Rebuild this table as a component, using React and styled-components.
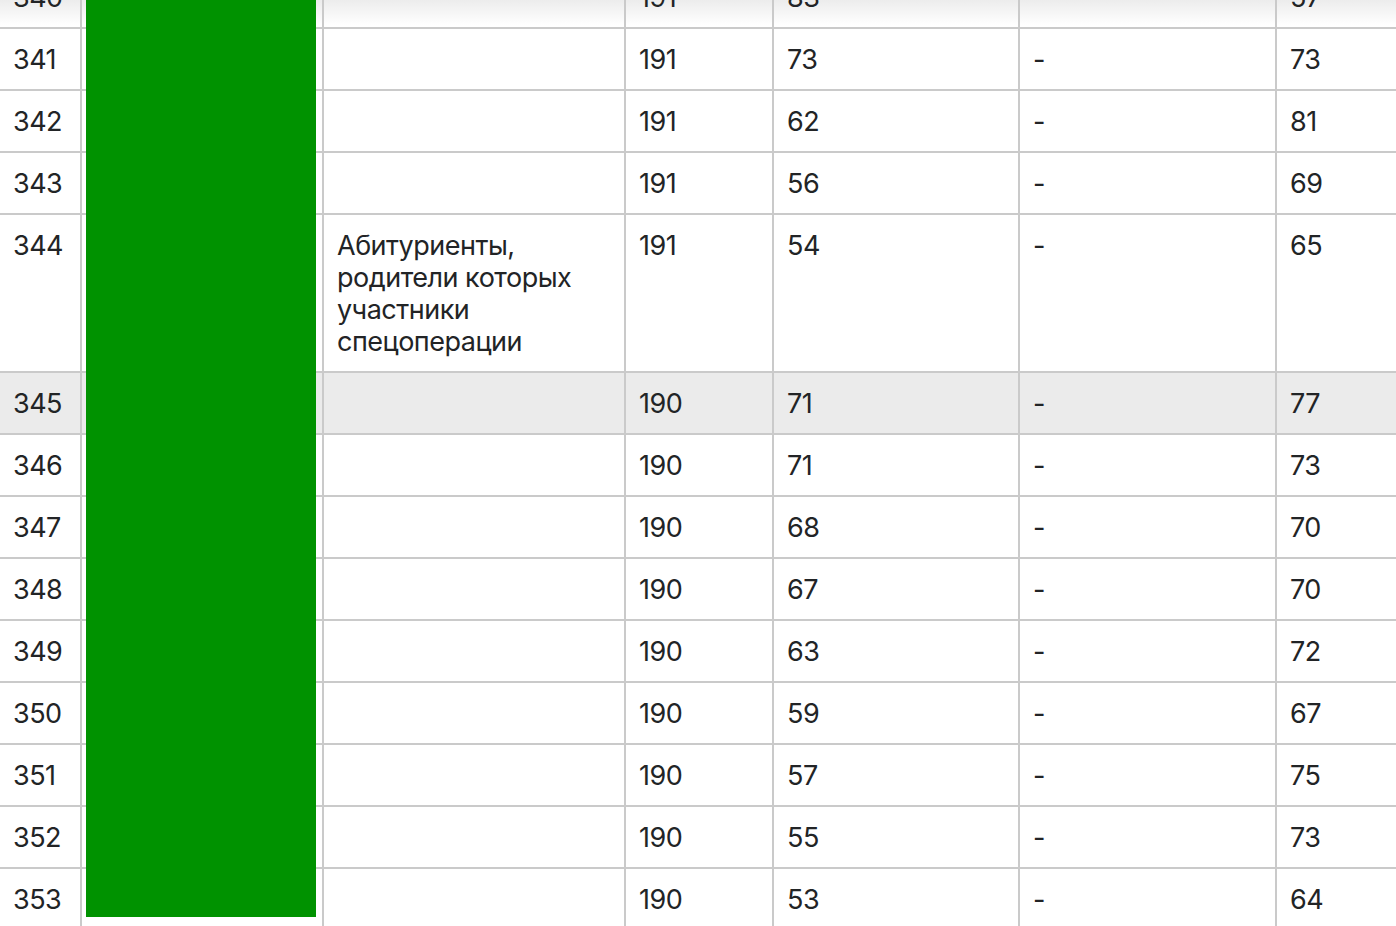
import React from 'react'
import styled, { createGlobalStyle } from "styled-components";

const GlobalStyle = createGlobalStyle`
  html, body {
    margin: 0;
    padding: 0;
    overflow: hidden;
    background: #fff;
  }
  body {
    font-family: Inter, "Noto Sans", "Liberation Sans", sans-serif;
    color: #222426;
  }
`;

const Viewport = styled.div`
  height: 100vh;
  overflow: hidden;
`;

const Table = styled.div`
  position: relative;
  width: max-content;
  /* list is scrolled: row 340 is mostly above the fold */
  margin-top: -33px;
`;

const Row = styled.div`
  display: grid;
  grid-template-columns: 82px 242px 302px 148px 246px 257px 200px;
  background: ${p => (p.$active ? "#ebebeb" : "transparent")};
`;

const Cell = styled.div`
  box-sizing: border-box;
  padding: 15px 14px 13px 13px;
  font-size: 27px;
  letter-spacing: -0.5px;
  line-height: 32px;
  border-right: 2px solid #cacaca;
  border-bottom: 2px solid #cacaca;
  background: ${p =>
    p.$fade ? "linear-gradient(#ececec 0, #ececec 33px, #fff 58px)" : "transparent"};
`;

const Redaction = styled.div`
  position: absolute;
  left: 86px;
  top: 0;
  width: 230px;
  height: 950px;
  background: #009200;
`;

const rows = [
  { n: 340, note: "", a: 191, b: 83, c: "-", d: 57 },
  { n: 341, note: "", a: 191, b: 73, c: "-", d: 73 },
  { n: 342, note: "", a: 191, b: 62, c: "-", d: 81 },
  { n: 343, note: "", a: 191, b: 56, c: "-", d: 69 },
  { n: 344, note: "Абитуриенты, родители которых участники спецоперации", a: 191, b: 54, c: "-", d: 65 },
  { n: 345, note: "", a: 190, b: 71, c: "-", d: 77, active: true },
  { n: 346, note: "", a: 190, b: 71, c: "-", d: 73 },
  { n: 347, note: "", a: 190, b: 68, c: "-", d: 70 },
  { n: 348, note: "", a: 190, b: 67, c: "-", d: 70 },
  { n: 349, note: "", a: 190, b: 63, c: "-", d: 72 },
  { n: 350, note: "", a: 190, b: 59, c: "-", d: 67 },
  { n: 351, note: "", a: 190, b: 57, c: "-", d: 75 },
  { n: 352, note: "", a: 190, b: 55, c: "-", d: 73 },
  { n: 353, note: "", a: 190, b: 53, c: "-", d: 64 },
];

function App() {
  return (
    <Viewport>
      <GlobalStyle />
      <Table>
        {rows.map((r, i) => {
          const fade = i === 0;
          return (
            <Row key={r.n} $active={r.active}>
              <Cell $fade={fade}>{r.n}</Cell>
              <Cell $fade={fade}></Cell>
              <Cell $fade={fade}>{r.note}</Cell>
              <Cell $fade={fade}>{r.a}</Cell>
              <Cell $fade={fade}>{r.b}</Cell>
              <Cell $fade={fade}>{r.c}</Cell>
              <Cell $fade={fade}>{r.d}</Cell>
            </Row>
          );
        })}
        <Redaction />
      </Table>
    </Viewport>
  )
}

export default App
